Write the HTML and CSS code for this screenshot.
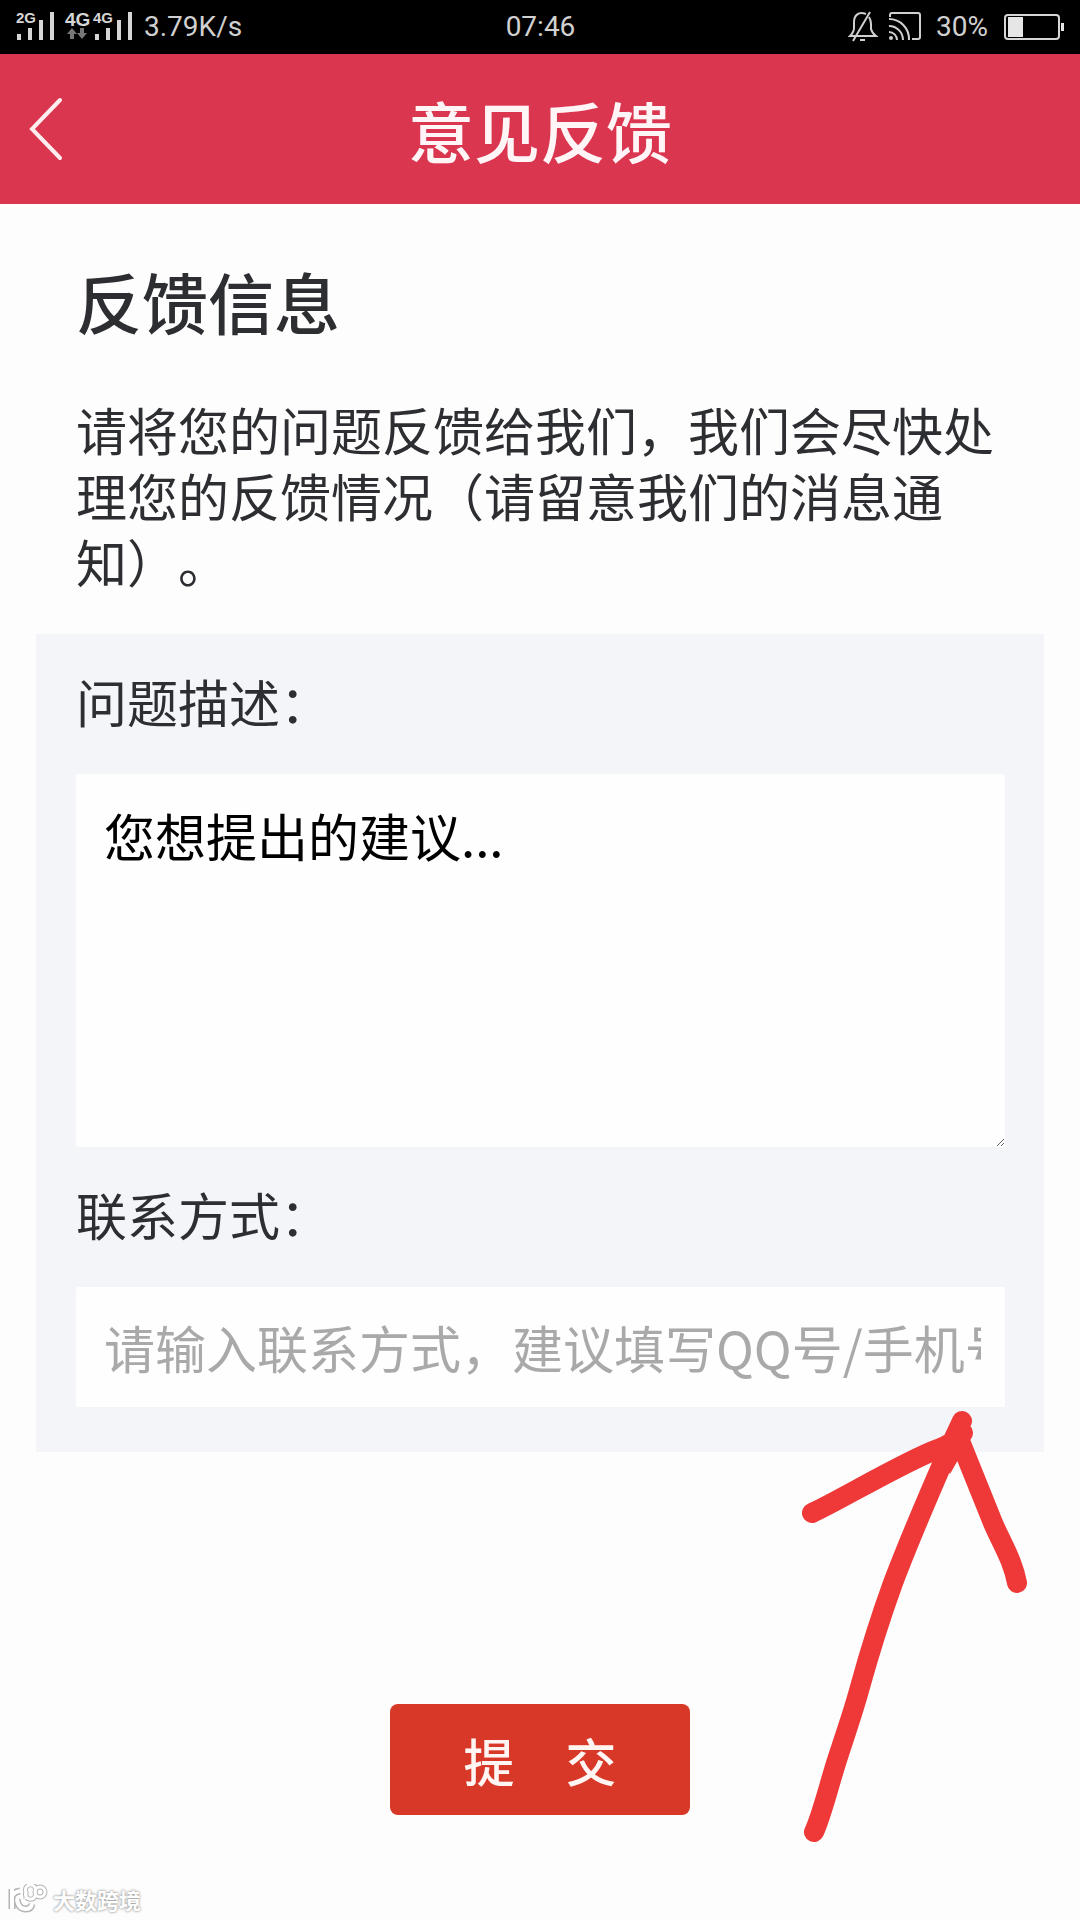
FILE: index.html
```html
<!DOCTYPE html>
<html lang="zh-CN">
<head>
<meta charset="utf-8">
<meta name="viewport" content="width=device-width, initial-scale=1">
<title>意见反馈</title>
<link rel="stylesheet" href="styles.css">
</head>
<body>
<div class="status-bar">
  <div class="status-left">
    <svg class="signals" width="120" height="48" viewBox="0 -8 120 48" aria-hidden="true">
      <g fill="#d6d6d6">
        <text class="net-label" x="0" y="12">2G</text>
        <path d="M1 23h4v6H1zM12 17h4v12h-4zM23 9h4v20h-4zM34 1h4v28h-4z"/>
        <text class="net-label net-label-large" x="49" y="15">4G</text>
        <text class="net-label" x="77" y="12">4G</text>
        <path d="M79 23h4v6h-4zM90 17h4v12h-4zM101 9h4v20h-4zM112 1h4v28h-4z"/>
      </g>
      <path fill="#777" d="M56 17l5 6h-3v5h-4v-5h-3zM66 28l-5-6h3v-5h4v5h3z"/>
    </svg>
    <span>3.79K/s</span>
  </div>
  <span class="clock">07:46</span>
  <div class="status-right">
    <svg width="30" height="32" viewBox="0 0 30 32" fill="none" stroke="#d0d0d0" stroke-width="2" aria-hidden="true">
      <path d="M18 3C10 0 6 5 6 11V17Q6 21 2 25H13M21 6Q23 9 23 13V18Q24 22 28 25H12M22 1L5 30M12 29h5"/>
    </svg>
    <svg class="cast" width="34" height="32" viewBox="0 0 34 32" fill="none" stroke="#d0d0d0" stroke-width="2" aria-hidden="true">
      <path d="M2 6V4Q2 2 4 2H30Q32 2 32 4V26Q32 28 30 28H24M1 8A20 20 0 0 1 21 29M1 15A14 14 0 0 1 15 29M1 21A8 8 0 0 1 9 29"/>
      <circle cx="3" cy="27" r="2" fill="#d0d0d0" stroke="none"/>
    </svg>
    <span>30%</span>
    <svg class="battery" width="61" height="28" viewBox="0 0 61 28" aria-hidden="true">
      <rect x="1" y="2" width="54" height="24" rx="3" fill="none" stroke="#d6d6d6" stroke-width="2"/>
      <path fill="#e6e6e6" d="M4 4h15v20H4zM57 10h3v8h-3z"/>
    </svg>
  </div>
</div>

<header class="title-bar">
  <a class="back" href="#" aria-label="返回">
    <svg width="36" height="64" viewBox="0 0 36 64" fill="none" stroke="#ffeef0" stroke-width="4" stroke-linecap="round" aria-hidden="true"><path d="M32 3L4 32L32 61"/></svg>
  </a>
  <h1 class="title">意见反馈</h1>
</header>

<main class="content">
  <section class="intro">
    <h2 class="heading">反馈信息</h2>
    <p class="description">请将您的问题反馈给我们，我们会尽快处理您的反馈情况（请留意我们的消息通知）。</p>
  </section>
  <form class="form">
    <div class="panel">
      <label class="label" for="issue">问题描述：</label>
      <textarea class="field field-area" id="issue">您想提出的建议...</textarea>
      <label class="label" for="contact">联系方式：</label>
      <input class="field field-line" id="contact" type="text" placeholder="请输入联系方式，建议填写QQ号/手机号">
      <svg class="arrow" width="230" height="450" viewBox="0 0 230 450" fill="none" stroke="#ef3838" stroke-width="20" stroke-linecap="round" stroke-linejoin="round" aria-hidden="true">
        <path d="M14 432C22 415 30 381 38 357C45 335 53 313 60 287C68 258 81 216 93 183C108 143 130 92 147 53L162 21M12 113C35 103 105 61 138 49Q156 42 163 33M158 36L193 123C203 146 213 161 217 183"/>
        <path fill="#ef3838" stroke="none" d="M136 48L154 32L166 46L150 74Z"/>
      </svg>
    </div>
    <button class="submit" type="submit">提　交</button>
  </form>
</main>

<div class="watermark">
  <svg width="42" height="30" viewBox="0 0 42 30" fill="none" aria-hidden="true">
    <path stroke="#b4b4b4" stroke-width="7" d="M4 5V25M4 13Q5 8 12 7M9 15Q10 25 18 25Q23 25 24 20"/>
    <path stroke="#b4b4b4" stroke-width="5" d="M18 15V8M27 8a5 5 0 1 0-9 0a5 5 0 1 0 9 0M27 8a5 5 0 1 1 10 0a5 5 0 1 1-10 0"/>
    <path stroke="#fff" stroke-width="4" d="M4 5V25M4 13Q5 8 12 7M9 15Q10 25 18 25Q23 25 24 20"/>
    <path stroke="#fff" stroke-width="3" d="M18 15V8M27 8a5 5 0 1 0-9 0a5 5 0 1 0 9 0M27 8a5 5 0 1 1 10 0a5 5 0 1 1-10 0"/>
  </svg>
  <span>大数跨境</span>
</div>
</body>
</html>
```
FILE: styles.css
```css
* {
  box-sizing: border-box;
}

body {
  position: relative;
  margin: 0;
  min-height: 100vh;
  background: #fdfdfd;
  color: #2c2e31;
  font-family: "Noto Sans CJK SC", sans-serif;
  font-size: 51px;
  line-height: 66px;
  text-spacing-trim: space-all;
}

.status-bar {
  display: grid;
  grid-template-columns: 1fr auto 1fr;
  align-items: center;
  height: 54px;
  padding: 0 15px 0 16px;
  background: #000;
  color: #d0d0d0;
  font-family: Roboto, sans-serif;
  font-size: 28px;
  line-height: 32px;
}

.status-left,
.status-right {
  display: flex;
  align-items: center;
}

.status-left {
  gap: 8px;
}

.status-right {
  justify-content: flex-end;
}

.net-label {
  font: bold 15px "Liberation Sans", sans-serif;
}

.net-label-large {
  font-size: 19px;
}

.cast {
  margin: 0 14px 0 10px;
}

.battery {
  margin-left: 16px;
}

.title-bar {
  display: grid;
  grid-template-columns: 1fr auto 1fr;
  align-items: center;
  height: 150px;
  padding: 0 28px;
  background: #db3650;
  color: #fff5f6;
}

.back {
  display: flex;
  justify-self: start;
}

.title,
.heading {
  margin: 0;
  font-size: 66px;
  font-weight: 500;
  line-height: 96px;
}

.content {
  padding: 48px 36px 100px;
}

.intro {
  padding: 0 40px;
}

.description {
  margin: 48px 0 40px;
}

.form {
  display: flex;
  flex-direction: column;
  align-items: center;
}

.panel {
  position: relative;
  display: flex;
  flex-direction: column;
  align-self: stretch;
  padding: 34px 39px 45px 40px;
  background: #f4f5f8;
}

.label {
  margin-bottom: 40px;
}

.field {
  display: block;
  width: 100%;
  margin: 0;
  border: 0;
  border-radius: 2px;
  background: #fefefe;
  font: inherit;
  outline: 0;
}

.field-area {
  height: 373px;
  margin-bottom: 34px;
  padding: 28px;
  color: #000;
  resize: vertical;
}

.field-line {
  height: 120px;
  padding: 0 24px 0 28px;
  color: #000;
}

.field-line::placeholder {
  color: #a9a9a9;
  opacity: 1;
}

.arrow {
  position: absolute;
  right: 14px;
  bottom: -398px;
  pointer-events: none;
}

.submit {
  width: 300px;
  height: 111px;
  margin-top: 252px;
  padding: 0;
  border: 0;
  border-radius: 8px;
  background: #d83828;
  color: #fff5f2;
  font: inherit;
  font-weight: 500;
}

.watermark {
  position: absolute;
  left: 8px;
  bottom: 6px;
  display: flex;
  align-items: center;
  gap: 3px;
  color: #fff;
  font-size: 22px;
  font-weight: 700;
  line-height: 30px;
  text-shadow: 0 0 2px #999, 0 0 3px #aaa;
}
```
